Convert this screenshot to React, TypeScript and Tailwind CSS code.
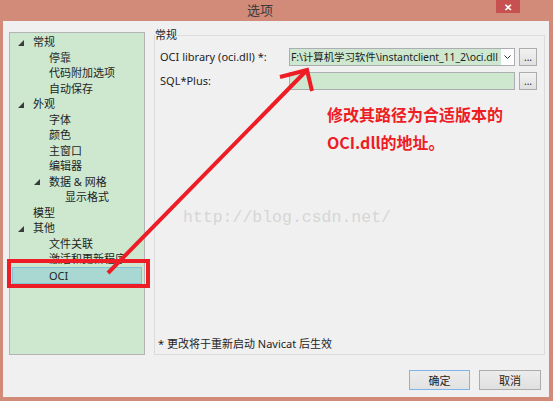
import React from "react";

type TreeItem = { label: string; level: number; expander?: boolean; selected?: boolean };

const treeItems: TreeItem[] = [
  { label: "常规", level: 0, expander: true },
  { label: "停靠", level: 1 },
  { label: "代码附加选项", level: 1 },
  { label: "自动保存", level: 1 },
  { label: "外观", level: 0, expander: true },
  { label: "字体", level: 1 },
  { label: "颜色", level: 1 },
  { label: "主窗口", level: 1 },
  { label: "编辑器", level: 1 },
  { label: "数据 & 网格", level: 1, expander: true },
  { label: "显示格式", level: 2 },
  { label: "模型", level: 0 },
  { label: "其他", level: 0, expander: true },
  { label: "文件关联", level: 1 },
  { label: "激活和更新程序", level: 1 },
  { label: "OCI", level: 1, selected: true },
];

const indent = ["pl-[5px]", "pl-[21px]", "pl-[37px]"];

function Expander() {
  return (
    <svg width="6" height="6" viewBox="0 0 6 6" className="mt-[2px]">
      <polygon points="6,0 6,6 0,6" fill="#3a3a3a" />
    </svg>
  );
}

function TreeRow({ item }: { item: TreeItem }) {
  return (
    <div
      className={`mx-[2px] flex items-center border ${indent[item.level]} ${
        item.selected
          ? "h-[17px] border-[#7fc3d6] bg-[#a8d8d1]"
          : "h-[15.5px] border-transparent"
      }`}
    >
      <span className="flex w-[15px] items-center">{item.expander && <Expander />}</span>
      <span className="whitespace-nowrap">{item.label}</span>
    </div>
  );
}

function DotsButton() {
  return (
    <button className="flex h-[18px] w-[18px] items-end justify-center border border-[#acacac] bg-gradient-to-b from-[#f2f2f2] to-[#e0e0e0] pb-[3px] text-[10px] leading-[10px] text-[#222]">
      ...
    </button>
  );
}

export default function App() {
  return (
    <div
      className="relative flex h-[401px] w-[553px] flex-col overflow-hidden bg-[#d38b79] text-[11px] text-[#1e1e1e]"
      style={{ fontFamily: '"Noto Sans", "Noto Sans CJK SC", sans-serif' }}
    >
      {/* title bar */}
      <div className="relative flex h-[21px] shrink-0 items-center justify-center pr-[33px]">
        <span className="text-[13px] leading-none text-[#3a3a3a]">选项</span>
        <div className="absolute right-[33px] top-0 flex h-[13px] w-[24px] items-center justify-center bg-[#c75050] text-[10px] font-bold leading-none text-white">
          ✕
        </div>
      </div>

      {/* body */}
      <div className="mb-[4px] ml-[3px] mr-[4px] flex flex-1 flex-col bg-[#f0f0f0] pt-[11px]">
        <div className="flex h-[323px]">
          {/* tree */}
          <div className="ml-[6px] h-[323px] w-[136px] border border-[#b4b4b4] bg-[#cde8cf] pt-[1px] leading-[15px]">
            {treeItems.map((it) => (
              <TreeRow key={it.label} item={it} />
            ))}
          </div>

          {/* group box */}
          <fieldset className="relative ml-[9px] -mt-[4px] flex h-[327px] w-[391px] flex-col border border-[#dcdcdc]">
            <legend className="ml-0 px-0 leading-[14px] text-[#222]">常规</legend>
            <div className="mt-[6px] flex items-center">
              <span className="w-[134px] pl-[5px]">OCI library (oci.dll) *:</span>
              <div className="flex h-[18px] w-[226px] items-center border border-[#abadb3] bg-[#cde8cf]">
                <span className="flex-1 overflow-hidden whitespace-nowrap pl-[1px] text-[10.5px] leading-[16px] tracking-[-0.1px]">
                  F:\计算机学习软件\instantclient_11_2\oci.dll
                </span>
                <span className="flex h-full w-[13px] shrink-0 items-center justify-center bg-white">
                  <svg width="7" height="4" viewBox="0 0 7 4">
                    <polyline points="0.5,0.5 3.5,3.5 6.5,0.5" fill="none" stroke="#333" strokeWidth="1" />
                  </svg>
                </span>
              </div>
              <span className="ml-[4px]">
                <DotsButton />
              </span>
            </div>
            <div className="mt-[6px] flex items-center">
              <span className="w-[134px] pl-[5px]">SQL*Plus:</span>
              <div className="h-[18px] w-[226px] border border-[#abadb3] bg-[#cde8cf]" />
              <span className="ml-[4px]">
                <DotsButton />
              </span>
            </div>

            <div
              className="mt-[10px] pl-[172px] text-[16px] font-bold leading-[28px] text-[#ee1c25]"
              style={{ fontFamily: '"Noto Sans CJK SC", "Noto Sans", sans-serif' }}
            >
              <div>修改其路径为合适版本的</div>
              <div>OCI.dll的地址。</div>
            </div>

            <div
              className="absolute left-[28px] top-[166px] whitespace-nowrap text-[16.5px] leading-[20px] text-[#d6d6d6]"
              style={{ fontFamily: '"Liberation Mono", monospace' }}
            >
              http://blog.csdn.net/
            </div>

            <div className="mt-auto pb-[3px] pl-[3px] leading-[14px]">* 更改将于重新启动 Navicat 后生效</div>
          </fieldset>
        </div>

        {/* buttons */}
        <div className="mt-[15px] flex justify-end gap-[9px] pr-[8px]">
          <button className="h-[20px] w-[61px] border border-[#7eb4ea] bg-gradient-to-b from-[#ececec] to-[#e2e2e2] text-[11px] leading-none">
            确定
          </button>
          <button className="h-[20px] w-[62px] border border-[#acacac] bg-gradient-to-b from-[#ececec] to-[#e0e0e0] text-[11px] leading-none">
            取消
          </button>
        </div>
      </div>

      {/* red annotation drawing */}
      <svg className="pointer-events-none absolute left-0 top-0" width="553" height="401" viewBox="0 0 553 401">
        <rect x="9" y="261" width="139" height="25" fill="none" stroke="#ee1c25" strokeWidth="4" />
        <line x1="108" y1="273" x2="306" y2="71" stroke="#ee1c25" strokeWidth="4" />
        <polyline points="280,77 307,70 312,91" fill="none" stroke="#ee1c25" strokeWidth="4" strokeLinejoin="miter" />
      </svg>
    </div>
  );
}
